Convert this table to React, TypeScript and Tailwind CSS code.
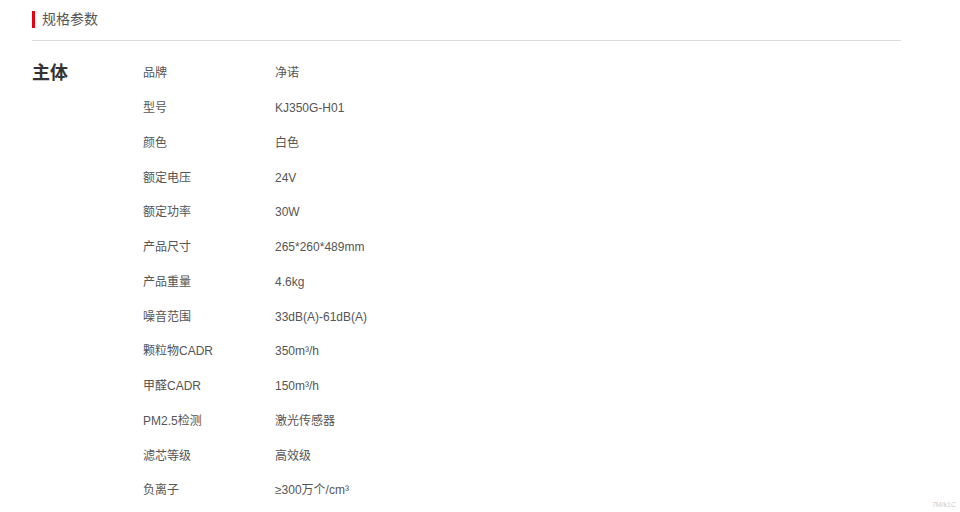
const specs = [
  ["品牌", "净诺"],
  ["型号", "KJ350G-H01"],
  ["颜色", "白色"],
  ["额定电压", "24V"],
  ["额定功率", "30W"],
  ["产品尺寸", "265*260*489mm"],
  ["产品重量", "4.6kg"],
  ["噪音范围", "33dB(A)-61dB(A)"],
  ["颗粒物CADR", "350m³/h"],
  ["甲醛CADR", "150m³/h"],
  ["PM2.5检测", "激光传感器"],
  ["滤芯等级", "高效级"],
  ["负离子", "≥300万个/cm³"],
];

export default function App() {
  return (
    <div
      className="relative h-[512px] w-[960px] overflow-hidden bg-white"
      style={{ fontFamily: '"Liberation Sans", "Noto Sans CJK SC", sans-serif' }}
    >
      {/* Header */}
      <div className="ml-8 w-[869px] border-b border-[#dcdcdc]">
        <div className="flex h-[40px] items-center pb-[2px]">
          <span className="h-[17px] w-[3px] bg-[#e60012]" />
          <span className="ml-[7px] text-[14px] text-[#555]">规格参数</span>
        </div>
      </div>

      {/* Body */}
      <div className="ml-8 mt-[15px] flex">
        <div className="w-[111px] pt-[5px] text-[18px] font-bold leading-[24px] text-[#333]">
          主体
        </div>
        <div className="flex flex-col">
          {specs.map(([label, value]) => (
            <div key={label} className="flex h-[34.75px] items-center text-[12px] text-[#555]">
              <span className="w-[132px]">{label}</span>
              <span>{value}</span>
            </div>
          ))}
        </div>
      </div>

      <span className="absolute bottom-[2px] right-[4px] text-[7px] text-[#ccc]">7M/k1C</span>
    </div>
  );
}
